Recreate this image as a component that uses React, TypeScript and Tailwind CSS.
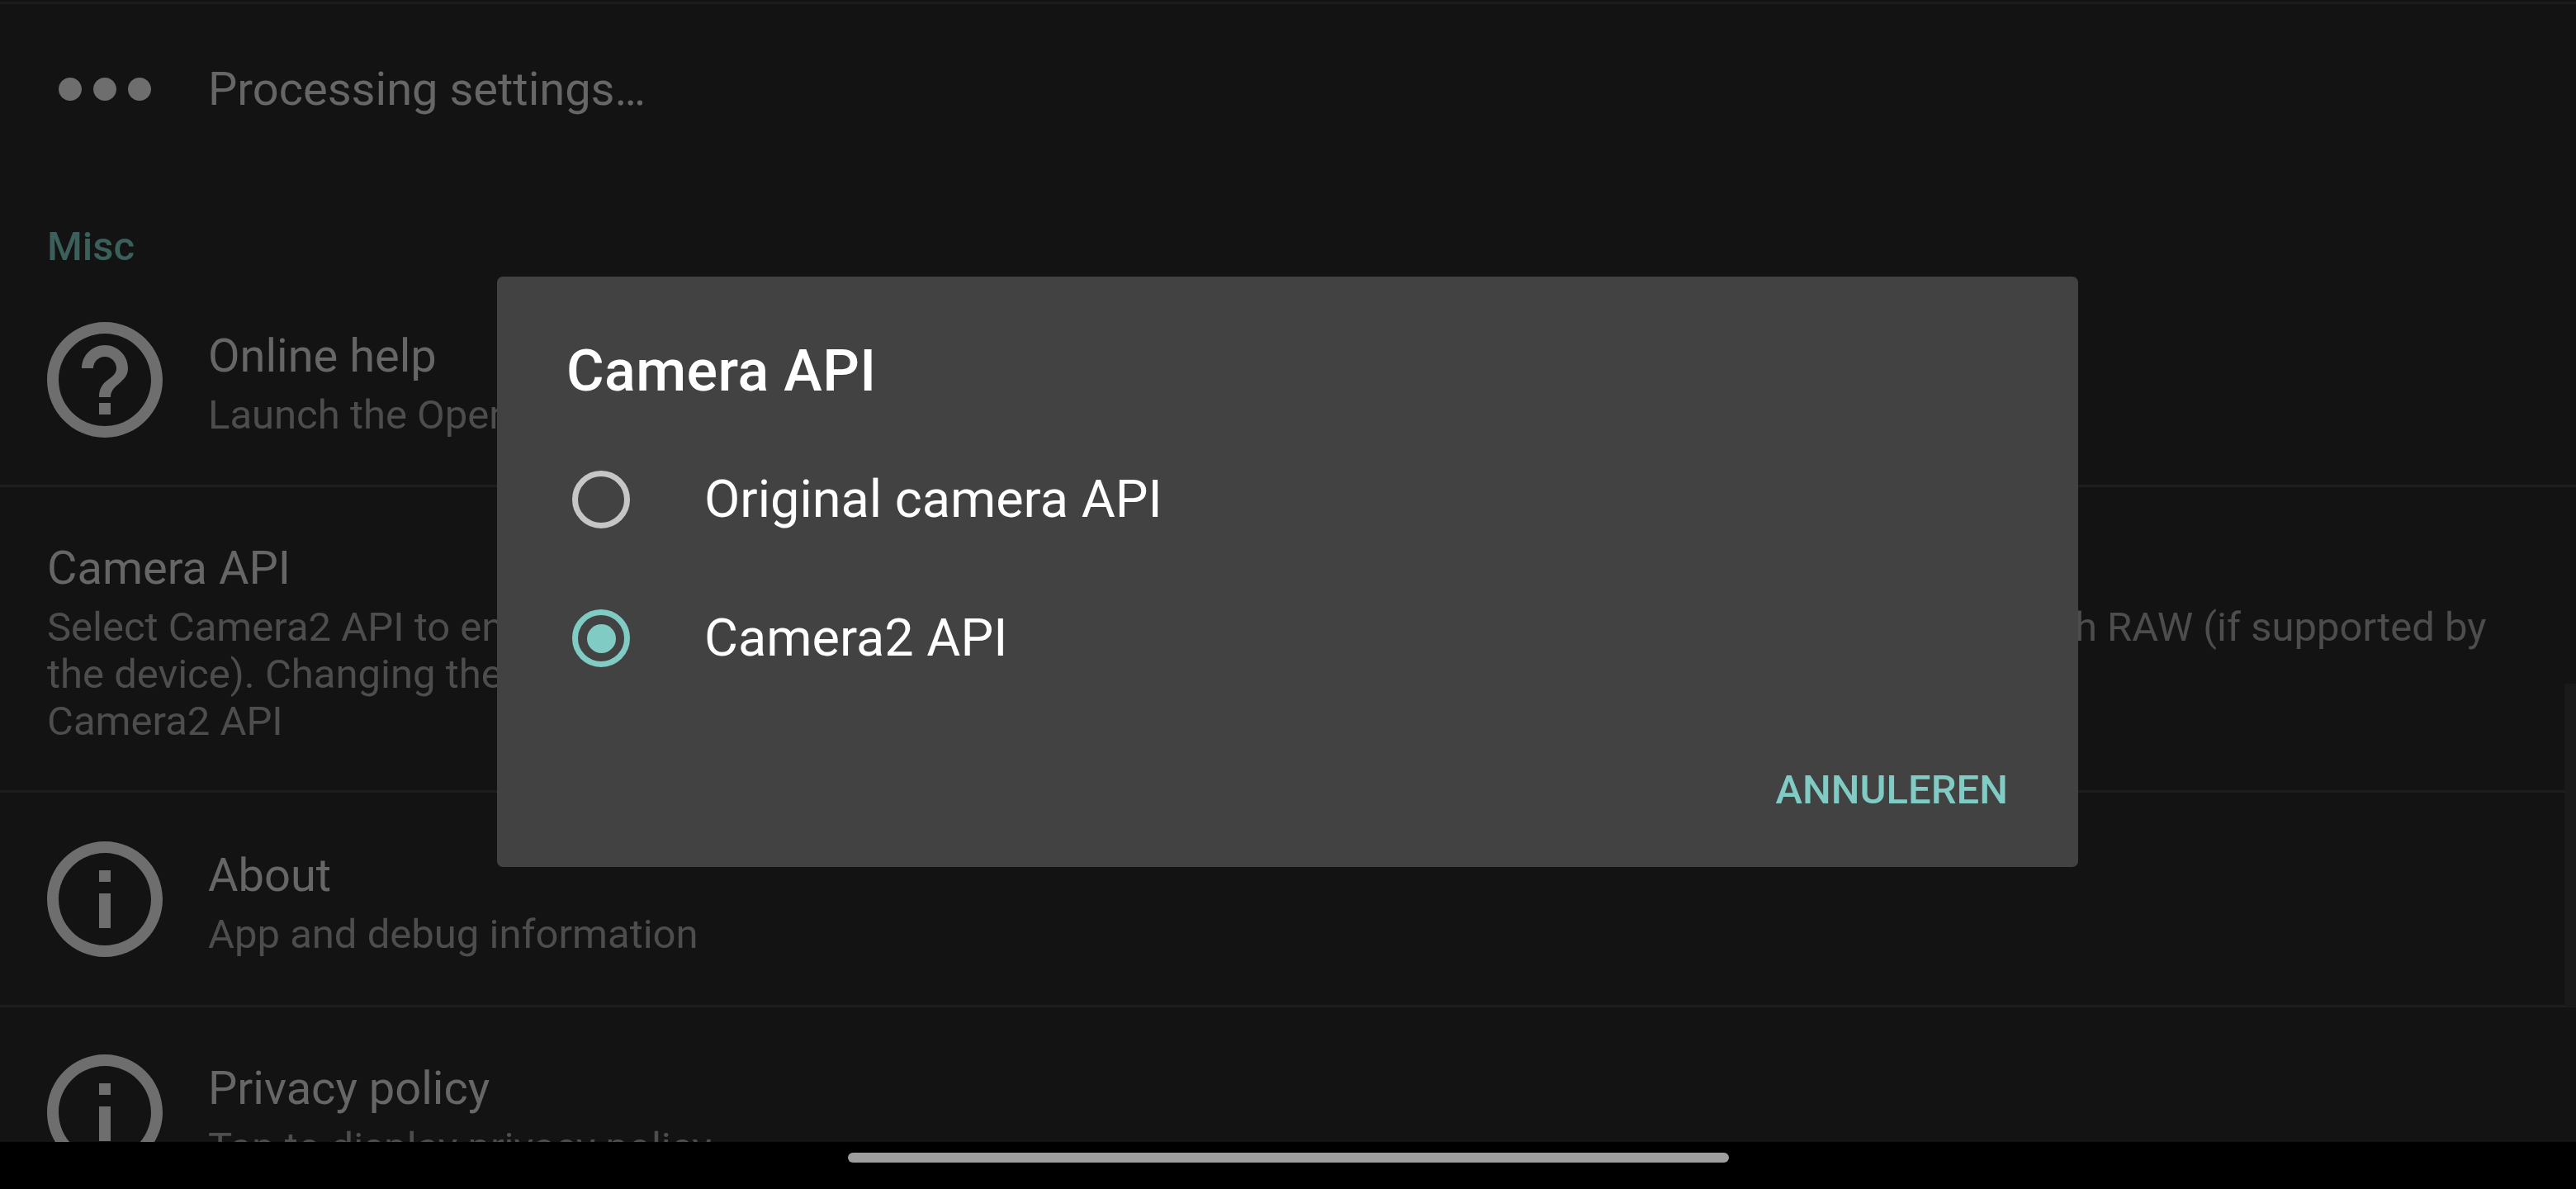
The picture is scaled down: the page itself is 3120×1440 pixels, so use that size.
type RowProps = {
  icon?: string
  title: string
  summary?: string
  height: string
}

const MORE = "M6 10c-1.1 0-2 .9-2 2s.9 2 2 2 2-.9 2-2-.9-2-2-2zm12 0c-1.1 0-2 .9-2 2s.9 2 2 2 2-.9 2-2-.9-2-2-2zm-6 0c-1.1 0-2 .9-2 2s.9 2 2 2 2-.9 2-2-.9-2-2-2z"
const HELP = "M11 18h2v-2h-2v2zm1-16C6.48 2 2 6.48 2 12s4.48 10 10 10 10-4.48 10-10S17.52 2 12 2zm0 18c-4.41 0-8-3.59-8-8s3.59-8 8-8 8 3.59 8 8-3.59 8-8 8zm0-14c-2.21 0-4 1.79-4 4h2c0-1.1.9-2 2-2s2 .9 2 2c0 2-3 1.75-3 5h2c0-2.25 3-2.5 3-5 0-2.21-1.79-4-4-4z"
const INFO = "M11 7h2v2h-2zm0 4h2v6h-2zm1-9C6.48 2 2 6.48 2 12s4.48 10 10 10 10-4.48 10-10S17.52 2 12 2zm0 18c-4.41 0-8-3.59-8-8s3.59-8 8-8 8 3.59 8 8-3.59 8-8 8z"

const Row = ({ icon, title, summary, height }: RowProps) => {
  return (
    <div className={`flex items-center gap-[41px] pl-[43px] shrink-0 ${height}`}>
      {icon && (
        <svg viewBox="0 0 24 24" className="w-[168px] h-[168px] shrink-0 fill-[#6e6e6e]">
          <path d={icon} />
        </svg>
      )}
      <div className={summary ? "flex flex-col pt-[10px] whitespace-nowrap" : "flex flex-col whitespace-nowrap"}>
        <span className="text-[56px] leading-[66px] text-[#666666]">{title}</span>
        {summary && <span className="mt-[10px] text-[49px] leading-[57px] text-[#4d4d4d]">{summary}</span>}
      </div>
    </div>
  )
}

const Radio = ({ label, checked }: { label: string; checked?: boolean }) => {
  return (
    <div className="flex items-center h-[168px] pl-[91px] gap-[90px]">
      {checked ? (
        <div className="w-[70px] h-[70px] rounded-full border-[7px] border-[#80cbc4] flex items-center justify-center">
          <div className="w-[35px] h-[35px] rounded-full bg-[#80cbc4]" />
        </div>
      ) : (
        <div className="w-[70px] h-[70px] rounded-full border-[7px] border-[#c6c6c6]" />
      )}
      <span className="text-[63px] leading-[74px] text-white">{label}</span>
    </div>
  )
}

const App = () => {
  return (
    <div className="relative w-[3120px] h-[1440px] flex flex-col bg-black overflow-hidden font-['Roboto',sans-serif]">
      {/* Settings list, dimmed */}
      <div className="relative flex-1 min-h-0 overflow-hidden flex flex-col bg-[#131313]">
        <div className="h-[5px] shrink-0 border-t-[2px] border-t-[#131313] bg-[#1c1c1c]" />
        <Row icon={MORE} title="Processing settings…" height="h-[205px]" />
        <div className="h-[122px] shrink-0 pl-[57px] pt-[60px]">
          <span className="text-[49px] leading-[57px] font-medium text-[#3b5f5a]">Misc</span>
        </div>
        <Row icon={HELP} title="Online help" summary="Launch the Open Camera help page" height="h-[255px]" />
        <div className="h-[373px] shrink-0 border-y-[3px] border-[#1e1e1e] flex flex-col justify-center pt-[10px] pl-[57px] pr-[60px]">
          <span className="text-[56px] leading-[66px] text-[#666666]">Camera API</span>
          <span className="mt-[10px] text-[49px] leading-[57px] text-[#4d4d4d]">
            Select Camera2 API to enable support for advanced features such as manual controls, burst mode and saving with RAW (if supported by the device). Changing the camera API will cause the application to restart.
          </span>
          <span className="text-[49px] leading-[57px] text-[#4d4d4d]">Camera2 API</span>
        </div>
        <Row icon={INFO} title="About" summary="App and debug information" height="h-[257px]" />
        <div className="h-[3px] shrink-0 bg-[#1e1e1e]" />
        <Row icon={INFO} title="Privacy policy" summary="Tap to display privacy policy" height="h-[253px]" />
        <div className="absolute right-0 top-[828px] w-[14px] h-[391px] bg-[#1a1a1a]" />
      </div>

      {/* Gesture bar */}
      <div className="h-[57px] shrink-0 flex justify-center pt-[13px]">
        <div className="w-[1067px] h-[12px] rounded-full bg-[#9e9e9e]" />
      </div>

      {/* Dialog */}
      <div className="absolute left-[602px] top-[335px] w-[1915px] h-[715px] rounded-[7px] bg-[#424242] flex flex-col">
        <div className="pl-[84px] pt-[73px] h-[186px] shrink-0 text-[70px] leading-[82px] tracking-[0.4px] font-medium text-white">Camera API</div>
        <Radio label="Original camera API" />
        <Radio label="Camera2 API" checked />
        <div className="flex justify-end pr-[85px] pt-[71px]">
          <span className="text-[49px] leading-[57px] font-medium text-[#80cbc4]">ANNULEREN</span>
        </div>
      </div>
    </div>
  )
}

export default App
